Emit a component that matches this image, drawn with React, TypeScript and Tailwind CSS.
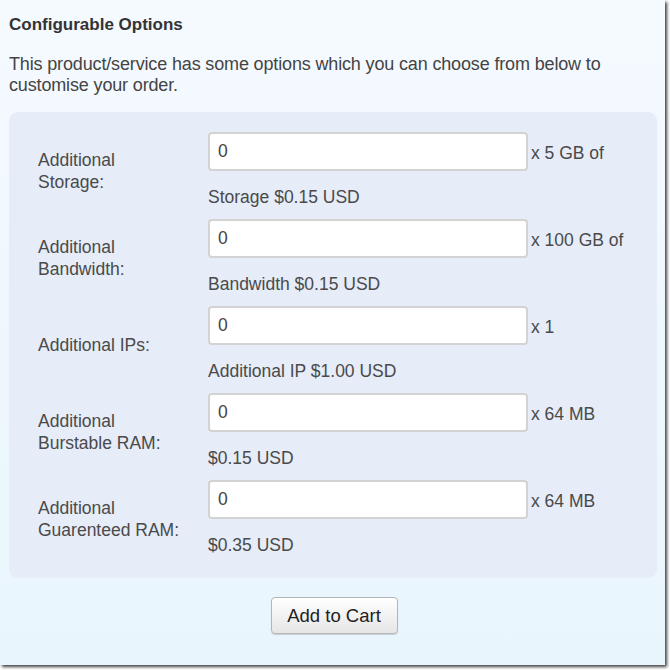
import React from "react";

type Option = {
  label: string[];
  unit: string;
  price: string;
};

const options: Option[] = [
  { label: ["Additional", "Storage:"], unit: "x 5 GB of", price: "Storage $0.15 USD" },
  { label: ["Additional", "Bandwidth:"], unit: "x 100 GB of", price: "Bandwidth $0.15 USD" },
  { label: ["Additional IPs:"], unit: "x 1", price: "Additional IP $1.00 USD" },
  { label: ["Additional", "Burstable RAM:"], unit: "x 64 MB", price: "$0.15 USD" },
  { label: ["Additional", "Guarenteed RAM:"], unit: "x 64 MB", price: "$0.35 USD" },
];

export default function App() {
  return (
    <div className="w-[670px] h-[670px] bg-white" style={{ fontFamily: '"Liberation Sans", Arial, sans-serif' }}>
      <div className="w-[665px] h-[665px] bg-gradient-to-b from-[#f5faff] to-[#e9f5fd] shadow-[2px_2px_3px_rgba(0,0,0,0.75)] pl-[9px] pr-[8px] pt-[14px]">
        <h2 className="text-[17px] leading-[22px] font-bold text-[#333]">Configurable Options</h2>
        <p className="mt-[18px] text-[18px] leading-[21px] text-[#444] tracking-[-0.15px]">
          This product/service has some options which you can choose from below to customise your order.
        </p>
        <div className="mt-[16px] w-[648px] rounded-[9px] bg-[#e6ecf8] pl-[29px] pt-[20px] pb-[22px]">
          <div className="grid grid-cols-[170px_1fr] gap-y-[11px] text-[17.5px] leading-[22px] text-[#4a4a4a]">
            {options.map((o, i) => (
              <React.Fragment key={i}>
                <div className="self-center pt-[1px]">
                  {o.label.map((l, j) => (
                    <div key={j}>{l}</div>
                  ))}
                </div>
                <div>
                  <div className="flex">
                    <input
                      readOnly
                      value="0"
                      className="w-[320px] h-[39px] rounded-[4px] border-2 border-[#d3d3d3] bg-white px-[8px] text-[17.5px] text-[#444] outline-none"
                    />
                    <span className="ml-[3px] pt-[10px]">{o.unit}</span>
                  </div>
                  <div className="mt-[15px]">{o.price}</div>
                </div>
              </React.Fragment>
            ))}
          </div>
        </div>
        <div className="mt-[19px] flex justify-center pl-[2px]">
          <button className="w-[127px] h-[37px] rounded-[4px] border border-[#b5b5b5] bg-gradient-to-b from-white to-[#e6e6e6] text-[18.5px] text-[#222] shadow-[0_1px_1px_rgba(0,0,0,0.15)]">
            Add to Cart
          </button>
        </div>
      </div>
    </div>
  );
}
